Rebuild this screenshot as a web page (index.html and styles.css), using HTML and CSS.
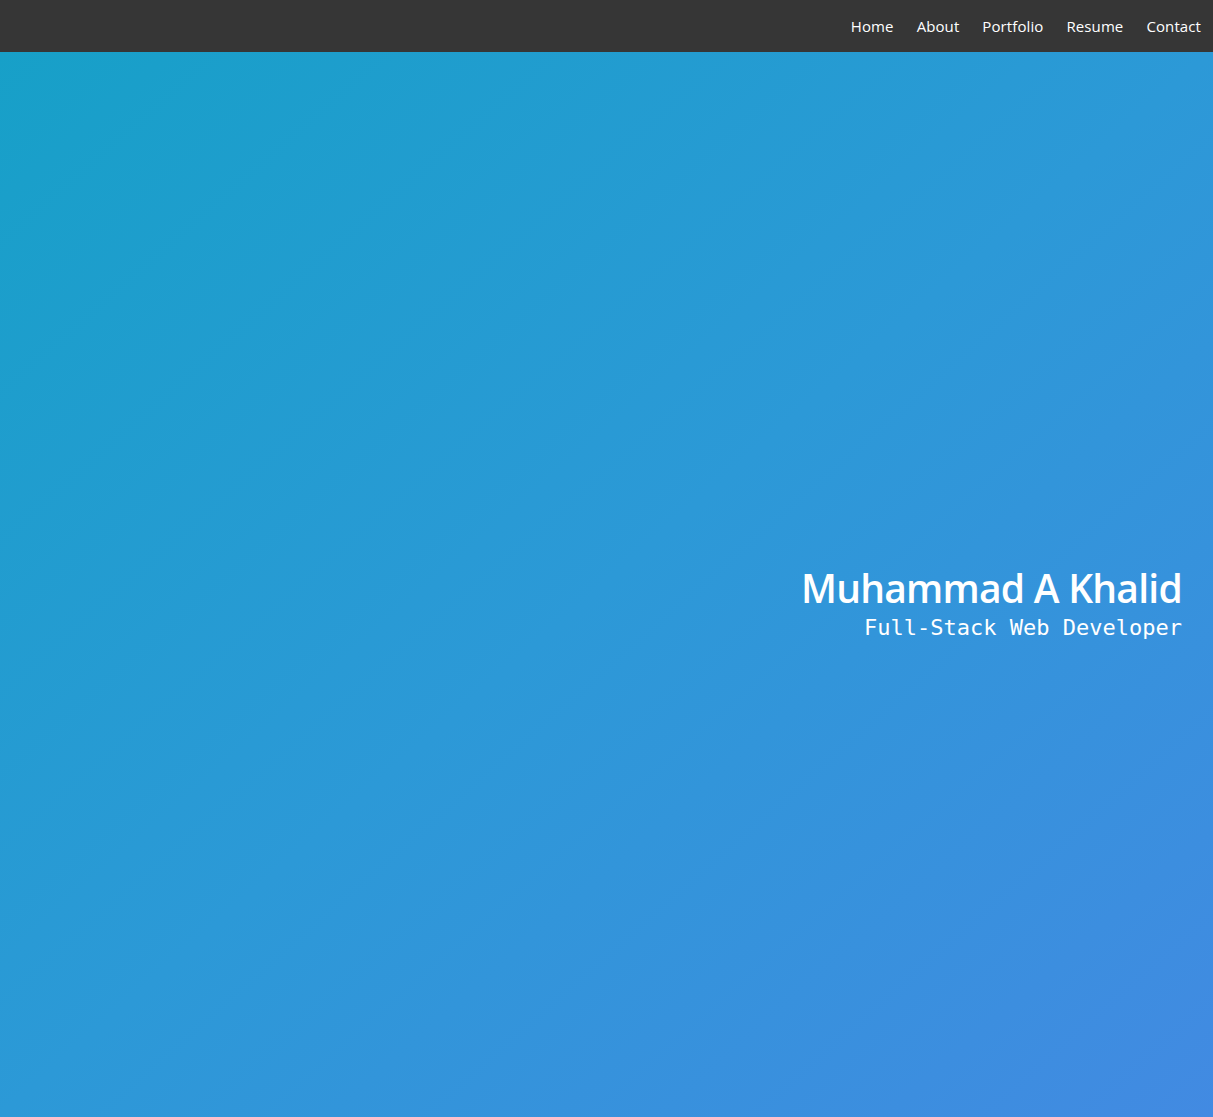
FILE: index.html
```html
<!DOCTYPE html>
<html lang="en">
<head>
<meta charset="utf-8">
<title>Muhammad A Khalid</title>
<link rel="stylesheet" href="styles.css">
</head>
<body>
<nav class="navbar">
  <ul class="nav-links">
    <li><a href="#">Home</a></li>
    <li><a href="#">About</a></li>
    <li><a href="#">Portfolio</a></li>
    <li><a href="#">Resume</a></li>
    <li><a href="#">Contact</a></li>
  </ul>
</nav>
<header class="hero">
  <div class="hero-text">
    <h1 class="hero-name">Muhammad A Khalid</h1>
    <p class="hero-role">Full-Stack Web Developer</p>
  </div>
</header>
</body>
</html>
```

FILE: styles.css
```css
html, body {
  margin: 0;
  padding: 0;
}
body {
  font-family: "Open Sans", "Noto Sans", sans-serif;
  background: #2b98d6;
  overflow: hidden;
}
.navbar {
  height: 52px;
  background: #363636;
  display: flex;
  justify-content: flex-end;
  align-items: center;
  padding-right: 12px;
}
.nav-links {
  list-style: none;
  margin: 0;
  padding: 0;
  display: flex;
  gap: 23px;
}
.nav-links a {
  color: #ffffff;
  text-decoration: none;
  font-size: 15px;
  letter-spacing: 0.1px;
}
.hero {
  height: 1065px;
  background: linear-gradient(to bottom right, #17a0c8 0%, #2c99d7 50%, #428ae2 100%);
  display: flex;
  justify-content: flex-end;
  align-items: center;
  padding-right: 31px;
  box-sizing: border-box;
}
.hero-text {
  text-align: right;
  margin-top: 38px;
}
.hero-name {
  margin: 0;
  color: #ffffff;
  font-size: 39px;
  letter-spacing: -0.75px;
  font-weight: 600;
  line-height: 44px;
}
.hero-role {
  margin: 5px 0 0;
  color: #ffffff;
  font-family: "DejaVu Sans Mono", "Liberation Mono", monospace;
  font-size: 22px;
  line-height: 26px;
}
```
